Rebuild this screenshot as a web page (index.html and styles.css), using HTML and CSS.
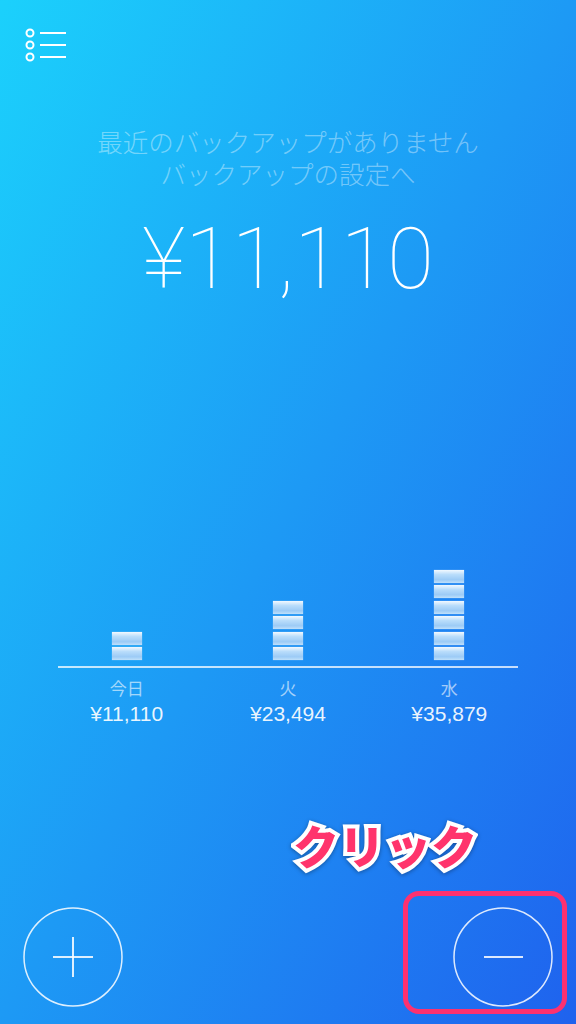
FILE: index.html
```html
<!doctype html>
<html lang="ja">
  <head>
    <meta charset="UTF-8" />
    <meta name="viewport" content="width=device-width, initial-scale=1.0" />
    <title>貯金箱</title>
    <link rel="stylesheet" href="styles.css">
  </head>
  <body>
    <div class="screen">
      <header class="header">
        <svg class="menu-icon" width="44" height="36" viewBox="0 0 44 36">
          <circle cx="6" cy="6" r="3.5" />
          <circle cx="6" cy="18" r="3.5" />
          <circle cx="6" cy="30" r="3.5" />
          <line x1="16" y1="6" x2="42" y2="6" />
          <line x1="16" y1="18" x2="42" y2="18" />
          <line x1="16" y1="30" x2="42" y2="30" />
        </svg>
      </header>

      <div class="notice">
        最近のバックアップがありません<br />
        バックアップの設定へ
      </div>

      <div class="total">¥11,110</div>

      <div class="chart">
        <div class="bars">
          <div class="bar">
            <span class="block"></span><span class="block"></span>
          </div>
          <div class="bar">
            <span class="block"></span><span class="block"></span>
            <span class="block"></span><span class="block"></span>
          </div>
          <div class="bar">
            <span class="block"></span><span class="block"></span>
            <span class="block"></span><span class="block"></span>
            <span class="block"></span><span class="block"></span>
          </div>
        </div>
        <div class="axis"></div>
        <div class="days">
          <div class="day">
            <div class="day-name">今日</div>
            <div class="day-amount">¥11,110</div>
          </div>
          <div class="day">
            <div class="day-name">火</div>
            <div class="day-amount">¥23,494</div>
          </div>
          <div class="day">
            <div class="day-name">水</div>
            <div class="day-amount">¥35,879</div>
          </div>
        </div>
      </div>

      <footer class="footer">
        <button class="round-btn">
          <svg width="100" height="100" viewBox="0 0 100 100">
            <circle cx="50" cy="50" r="49" />
            <line x1="30" y1="50" x2="70" y2="50" />
            <line x1="50" y1="30" x2="50" y2="70" />
          </svg>
        </button>
        <div class="minus-wrap">
          <span class="hint">クリック</span>
          <span class="highlight"></span>
          <button class="round-btn">
            <svg width="100" height="100" viewBox="0 0 100 100">
              <circle cx="50" cy="50" r="49" />
              <line x1="31" y1="50" x2="70" y2="50" />
            </svg>
          </button>
        </div>
      </footer>
    </div>
  </body>
</html>
```

FILE: styles.css
```css
html,
body {
  margin: 0;
  padding: 0;
}
body {
  font-family: "Noto Sans CJK JP", "Noto Sans", sans-serif;
  color: white;
}
.screen {
  width: 576px;
  height: 1024px;
  display: flex;
  flex-direction: column;
  background: linear-gradient(to bottom right, #1bd1fc, #1f62ee);
  overflow: hidden;
}
.header {
  height: 36px;
  padding: 27px 0 0 24px;
}
.menu-icon {
  display: block;
  fill: none;
  stroke: white;
  stroke-width: 2;
}
.notice {
  margin-top: 62px;
  text-align: center;
  font-size: 25.5px;
  font-weight: 300;
  line-height: 32px;
  color: rgba(255, 255, 255, 0.4);
}
.total {
  margin-top: 28px;
  text-align: center;
  font-family: Roboto, "Liberation Sans", sans-serif;
  font-weight: 100;
  font-size: 85px;
  line-height: 84px;
}
.chart {
  margin: 264px 46px 0 46px;
}
.bars {
  display: flex;
  height: 95px;
  align-items: flex-end;
}
.bar {
  flex: 1;
  display: flex;
  flex-direction: column;
  align-items: center;
  gap: 2.5px;
}
.block {
  display: block;
  width: 30px;
  height: 13px;
  background: linear-gradient(to bottom, #f2f9ff 0%, #b9ddfb 35%, #9ccbf6 75%, #bfe0fb 100%);
  box-shadow: 0 0 1px rgba(255, 255, 255, 0.5);
}
.axis {
  height: 2px;
  margin: 6px 12px 0 12px;
  background: rgba(255, 255, 255, 0.75);
}
.days {
  display: flex;
  margin-top: 8px;
}
.day {
  flex: 1;
  text-align: center;
}
.day-name {
  font-size: 17px;
  line-height: 24px;
  color: rgba(255, 255, 255, 0.6);
}
.day-amount {
  font-family: "Liberation Sans", Arial, sans-serif;
  font-size: 21px;
  line-height: 28px;
  color: rgba(255, 255, 255, 0.92);
}
.footer {
  margin-top: auto;
  padding: 0 23px 17px 23px;
  display: flex;
  justify-content: space-between;
}
.round-btn {
  display: block;
  width: 100px;
  height: 100px;
  padding: 0;
  border: none;
  background: none;
}
.round-btn svg {
  display: block;
  fill: none;
  stroke: rgba(255, 255, 255, 0.85);
}
.round-btn circle {
  stroke-width: 1.5;
}
.round-btn line {
  stroke-width: 2;
}
.minus-wrap {
  position: relative;
}
.highlight {
  position: absolute;
  left: -50px;
  top: -16px;
  width: 154px;
  height: 113px;
  border: 5px solid #fd3170;
  border-radius: 16px;
}
.hint {
  position: absolute;
  left: -160px;
  top: -86px;
  white-space: nowrap;
  font-size: 46px;
  font-weight: 900;
  line-height: 1;
  color: #ff346c;
  -webkit-text-stroke: 8px white;
  paint-order: stroke fill;
  filter: drop-shadow(0 1px 2px rgba(0, 0, 0, 0.35));
}
```
